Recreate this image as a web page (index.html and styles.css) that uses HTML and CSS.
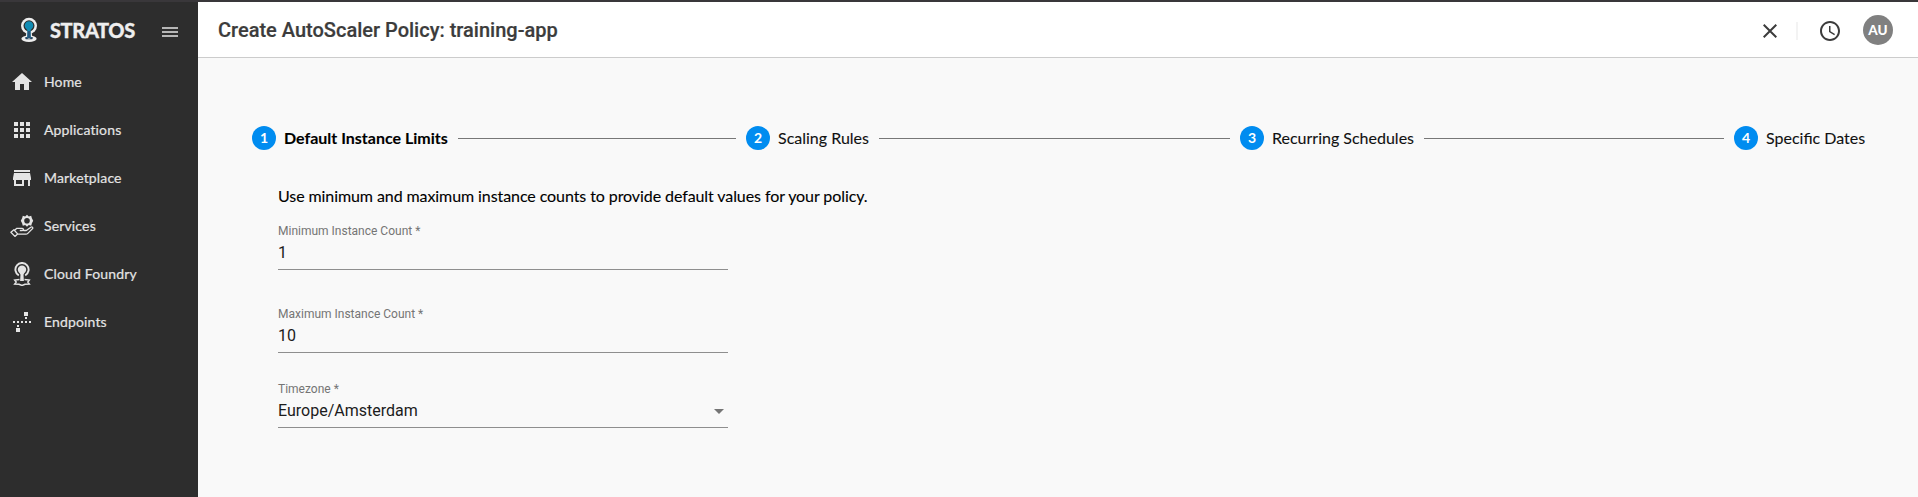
FILE: index.html
```
<!DOCTYPE html>
<html lang="en">
<head>
<meta charset="utf-8">
<title>Stratos</title>
<link rel="stylesheet" href="styles.css">
</head>
<body>
<div class="app">
  <aside class="sidebar">
    <div class="brand">
      <svg class="brand-logo" viewBox="0 0 18 26" width="18" height="26">
        <ellipse cx="9" cy="21.800" rx="7.600" ry="3.200" fill="#eee"/>
        <circle cx="9" cy="8.800" r="8" fill="#eee"/>
        <path d="M6.500 14h5l1 8h-7z" fill="#eee"/>
        <circle cx="9" cy="8.800" r="5.500" fill="#2d2d2d"/>
        <path d="M4.800 20.500l3-.8v1.800h2.400v-1.800l3 .8-1 1.700H5.800z" fill="#26435c"/>
        <path d="M9 4.200a4.300 4.300 0 0 1 4.300 4.300c0 2.300-1.500 3.100-2.400 4.200-.5.700-.4 4-.2 8.300H7.300c.2-4.300.3-7.600-.2-8.300-.9-1.100-2.400-1.900-2.400-4.200A4.300 4.300 0 0 1 9 4.200z" fill="#118cb4"/>
        <path d="M7.500 14h3l.2 7H7.300z" fill="#26567c"/>
      </svg>
      <span class="brand-name">STRATOS</span>
      <svg class="menu" viewBox="0 0 16 10" width="16" height="10"><path d="M0 1h16M0 5h16M0 9h16" stroke="#e4e4e4" stroke-width="1.600"/></svg>
    </div>
    <nav class="nav">
      <a class="nav-item"><svg viewBox="0 0 24 24" width="24" height="24"><path d="M10 20v-6h4v6h5v-8h3L12 3 2 12h3v8z"/></svg>Home</a>
      <a class="nav-item"><svg viewBox="0 0 24 24" width="24" height="24"><path d="M4 8h4V4H4v4zm6 12h4v-4h-4v4zm-6 0h4v-4H4v4zm0-6h4v-4H4v4zm6 0h4v-4h-4v4zm6-10v4h4V4h-4zm-6 4h4V4h-4v4zm6 6h4v-4h-4v4zm0 6h4v-4h-4v4z"/></svg>Applications</a>
      <a class="nav-item"><svg viewBox="0 0 24 24" width="24" height="24"><path d="M20 4H4v2h16V4zm1 10v-2l-1-5H4l-1 5v2h1v6h10v-6h4v6h2v-6h1zm-9 4H6v-4h6v4z"/></svg>Marketplace</a>
      <a class="nav-item"><svg viewBox="0 0 24 24" width="24" height="24">
        <path fill-rule="evenodd" d="M17 .8l1.800 1.700 2.400-.7.700 2.500 1.300 2.500-1.300 2.400-.7 2.500-2.400-.6L17 12.800l-1.800-1.700-2.400.6-.7-2.500-1.300-2.400 1.300-2.500.7-2.500 2.400.7zM17 4a2.800 2.800 0 1 0 0 5.600A2.800 2.800 0 0 0 17 4z"/>
        <path d="M4.300 16.500l2.600-2.200h5.300c1.700 0 1.700 2.200 0 2.200H9.800M13.500 16.500h2.800l4.500-3.300c1.500-.9 2.600.6 1.500 1.700l-4.500 4.500c-.6.600-1 .8-1.800.8H7.300M.9 18.300l3-2.500 3.700 4.100-2.700 2.500z" fill="none" stroke="#e4e4e4" stroke-width="1.300" stroke-linejoin="round"/></svg>Services</a>
      <a class="nav-item"><svg viewBox="0 0 24 24" width="24" height="24">
        <path d="M8.800 13.300a6.600 6.600 0 1 1 6.400 0" fill="none" stroke="#e4e4e4" stroke-width="1.900"/>
        <path d="M12 3.500a4.200 4.200 0 0 1 4.200 4.200c0 2.600-2.400 3.200-2.700 5l.4 6.300h-3.800l.4-6.300c-.3-1.800-2.700-2.400-2.700-5A4.200 4.200 0 0 1 12 3.500z"/>
        <path d="M9.500 17.500l-4.800.6 1.500 2-1.500 2 4.300.1 3 1.300 3-1.300 4.300-.1-1.500-2 1.500-2-4.800-.6" fill="none" stroke="#e4e4e4" stroke-width="1.500"/></svg>Cloud Foundry</a>
      <a class="nav-item"><svg viewBox="0 0 24 24" width="24" height="24"><path d="M14 2h4v4h-4zM15 7h2v2h-2zM3 11h2v2H3zM7 11h2v2H7zM11 11h2v2h-2zM15 11h2v2h-2zM19 11h2v2h-2zM7 15h2v2H7zM6 18h4v4H6z"/></svg>Endpoints</a>
    </nav>
  </aside>
  <main class="main">
    <header class="header">
      <h1 class="title">Create AutoScaler Policy: training-app</h1>
      <div class="actions">
        <svg class="close" viewBox="0 0 14 14" width="14" height="14"><path d="M.7.700l12.600 12.600M13.300.700L.7 13.300" stroke="#3c3c3c" stroke-width="2"/></svg>
        <span class="divider"></span>
        <svg class="clock" viewBox="2 2 20 20" width="20" height="20"><path fill="#3c3c3c" d="M11.990 2C6.470 2 2 6.480 2 12s4.470 10 9.990 10C17.520 22 22 17.520 22 12S17.520 2 11.990 2zM12 20c-4.420 0-8-3.580-8-8s3.580-8 8-8 8 3.580 8 8-3.580 8-8 8zm.5-13H11v6l5.250 3.150.75-1.230-4.500-2.670z"/></svg>
        <span class="avatar">AU</span>
      </div>
    </header>
    <div class="content">
      <ol class="stepper">
        <li class="step step-active"><span class="num">1</span><span class="step-label">Default Instance Limits</span></li>
        <li class="step"><span class="num">2</span><span class="step-label">Scaling Rules</span></li>
        <li class="step"><span class="num">3</span><span class="step-label">Recurring Schedules</span></li>
        <li class="step"><span class="num">4</span><span class="step-label">Specific Dates</span></li>
      </ol>
      <form class="form">
        <p class="intro">Use minimum and maximum instance counts to provide default values for your policy.</p>
        <div class="field"><span class="label">Minimum Instance Count *</span><span class="value">1</span></div>
        <div class="field"><span class="label">Maximum Instance Count *</span><span class="value">10</span></div>
        <div class="field field-select"><span class="label">Timezone *</span><span class="value">Europe/Amsterdam<i class="arrow"></i></span></div>
      </form>
    </div>
  </main>
</div>
</body>
</html>
```
FILE: styles.css
```
* { box-sizing: border-box; }
body { margin: 0; font-family: Lato, sans-serif; background: #f9f9f9; }
.app { display: flex; height: 497px; border-top: 2px solid #39373a; overflow: hidden; }
.sidebar { width: 198px; flex: none; background: #2d2d2d; color: #e4e4e4; }
.brand { display: flex; align-items: center; height: 56px; padding: 0 20px; }
.brand-logo { flex: none; }
.brand-name { flex: none; width: 86px; margin: 0 26px 0 12px; font-size: 20px; font-weight: 900; line-height: 24px; letter-spacing: -.4px; color: #eee; -webkit-text-stroke: .3px; }
.menu { flex: none; margin-top: 3px; }
.nav-item { display: flex; align-items: center; gap: 10px; height: 48px; padding-left: 10px; font-size: 14px; line-height: 20px; letter-spacing: .15px; -webkit-text-stroke: .2px; }
.nav-item svg { fill: #e4e4e4; }
.main { flex: 1; min-width: 0; }
.header { display: flex; align-items: center; justify-content: space-between; height: 56px; padding: 0 25px 0 20px; background: #fff; border-bottom: 1px solid #ccc; }
.title { margin: 0; font: 500 20px/28px Roboto, sans-serif; color: #3c3c3c; -webkit-text-stroke: .2px; }
.actions { display: flex; align-items: center; }
.divider { width: 2px; height: 18px; margin: 2px 22px 0 19px; background: #f3f3f3; }
.close, .clock { margin-top: 2px; }
.avatar { width: 30px; height: 30px; margin-left: 23px; border-radius: 50%; background: #808080; color: #fff; font: 900 13.500px/30px Lato, sans-serif; text-align: center; }
.content { padding: 68px 54px 0; }
.stepper { display: flex; margin: 0; padding: 0; list-style: none; }
.step { display: flex; align-items: center; flex: none; width: 494px; height: 24px; font-size: 16px; color: #111; }
.step:last-child { width: auto; }
.step:not(:last-child)::after { content: ""; flex: 1; height: 1px; margin: 1px 10px 0; background: #777; }
.step-active { font-weight: 700; color: #000; }
.num { width: 24px; height: 24px; margin-right: 8px; border-radius: 50%; background: #008cf0; color: #fff; font-size: 14px; font-weight: 700; line-height: 24px; text-align: center; }
.step-label { line-height: 24px; white-space: nowrap; -webkit-text-stroke: .1px; }
.form { width: 450px; margin-left: 26px; padding-top: 34px; }
.intro { margin: 0; font-size: 16px; line-height: 24px; letter-spacing: -.085px; color: #000; white-space: nowrap; -webkit-text-stroke: .1px; }
.field { display: flex; flex-direction: column; height: 62px; margin-bottom: 21px; padding-top: 15px; border-bottom: 1px solid #8e8e8e; font-family: Roboto, sans-serif; }
.field-select { height: 54px; padding-top: 7px; }
.label { font-size: 12px; line-height: 16px; color: #757575; }
.value { display: flex; justify-content: space-between; align-items: center; margin-top: 4px; font-size: 16px; line-height: 20px; color: #1c1c1c; }
.arrow { margin-right: 4px; border: 5px solid transparent; border-top-color: #757575; border-bottom: 0; }
```
